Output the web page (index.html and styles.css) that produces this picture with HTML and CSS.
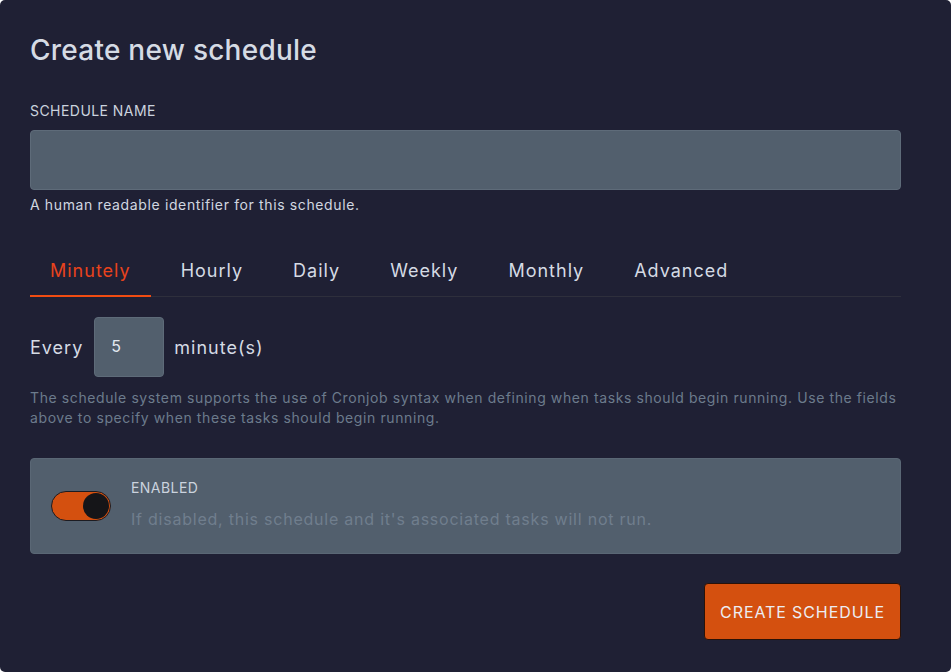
FILE: index.html
```html
<!DOCTYPE html>
<html lang="en">
<head>
<meta charset="utf-8">
<title>Create new schedule</title>
<link rel="stylesheet" href="styles.css">
</head>
<body>
<div class="panel">
  <h1 class="title">Create new schedule</h1>
  <div class="field">
    <label class="label" for="name">Schedule Name</label>
    <input class="input" id="name" type="text">
    <p class="help">A human readable identifier for this schedule.</p>
  </div>
  <div class="tabs">
    <div class="tab active">Minutely</div>
    <div class="tab">Hourly</div>
    <div class="tab">Daily</div>
    <div class="tab">Weekly</div>
    <div class="tab">Monthly</div>
    <div class="tab">Advanced</div>
  </div>
  <div class="every">
    <span>Every</span>
    <input class="num" type="text" value="5">
    <span>minute(s)</span>
  </div>
  <p class="desc">The schedule system supports the use of Cronjob syntax when defining when tasks should begin running. Use the fields above to specify when these tasks should begin running.</p>
  <div class="enabled">
    <div class="toggle"><span class="knob"></span></div>
    <div class="enabled-text">
      <div class="label">Enabled</div>
      <div class="enabled-desc">If disabled, this schedule and it's associated tasks will not run.</div>
    </div>
  </div>
  <div class="actions">
    <button class="btn">Create Schedule</button>
  </div>
</div>
</body>
</html>
```
FILE: styles.css
```css
* { box-sizing: border-box; }
html, body { margin: 0; padding: 0; background: #ffffff; }
body { font-family: "Inter", "Noto Sans", sans-serif; }
.panel {
  width: 951px;
  height: 672px;
  background: #1f2034;
  border-radius: 5px;
  padding: 28px 50px 0 30px;
  color: #e2e8f0;
}
.title {
  margin: 0;
  font-size: 28px;
  font-weight: 500;
  line-height: 44px;
  letter-spacing: 0.25px;
  color: #d5dbe4;
}
.field { margin-top: 29px; }
.label {
  display: block;
  font-size: 14px;
  line-height: 20px;
  letter-spacing: 0.45px;
  text-transform: uppercase;
  color: #cbd3de;
}
.field .label { margin-bottom: 9px; }
.input {
  display: block;
  width: 871px;
  height: 60px;
  background: #525f6d;
  border: 1px solid #5e6b79;
  border-radius: 4px;
  outline: none;
}
.help {
  margin: 5px 0 0;
  font-size: 14px;
  line-height: 20px;
  letter-spacing: 0.63px;
  color: #d1d7e0;
}
.tabs {
  display: flex;
  gap: 10px;
  margin-top: 34px;
  width: 871px;
  border-bottom: 1px solid #2e2f3c;
}
.tab {
  padding: 9px 20px 11px;
  font-size: 18px;
  line-height: 26px;
  letter-spacing: 1px;
  color: #d5dbe4;
  border-bottom: 2px solid transparent;
  margin-bottom: -1px;
}
.tab.active {
  color: #e8431c;
  border-bottom-color: #f04c12;
}
.every {
  display: flex;
  align-items: center;
  gap: 10px;
  margin-top: 20px;
  font-size: 18px;
  letter-spacing: 1px;
  color: #d5dbe4;
}
.every .num {
  width: 70px;
  height: 60px;
  margin-left: 1px;
  padding: 0 0 3px 16px;
  background: #525f6d;
  border: 1px solid #5e6b79;
  border-radius: 4px;
  color: #e2e8f0;
  font-family: inherit;
  font-size: 16px;
  outline: none;
}
.desc {
  margin: 11px 0 0;
  font-size: 14px;
  line-height: 20px;
  letter-spacing: 0.6px;
  color: #6c7b8c;
  width: 871px;
}
.enabled {
  display: flex;
  align-items: flex-start;
  gap: 20px;
  margin-top: 30px;
  width: 871px;
  height: 96px;
  padding: 19px 20px;
  background: #525f6d;
  border: 1px solid #5a6775;
  border-radius: 4px;
}
.toggle {
  flex: none;
  width: 60px;
  height: 30px;
  margin-top: 13px;
  border-radius: 15px;
  background: #d4500f;
  border: 1px solid #1c1c22;
  position: relative;
}
.knob {
  position: absolute;
  right: 1px;
  top: 1px;
  width: 26px;
  height: 26px;
  border-radius: 50%;
  background: #151518;
}
.enabled-desc {
  margin-top: 10px;
  font-size: 16px;
  line-height: 22px;
  letter-spacing: 0.77px;
  color: #707e8d;
}
.actions {
  display: flex;
  justify-content: flex-end;
  margin-top: 29px;
  width: 871px;
}
.btn {
  width: 197px;
  height: 57px;
  background: #d4500f;
  border: 1px solid #2a1208;
  border-radius: 4px;
  color: #ecedf2;
  font-family: inherit;
  font-size: 16px;
  letter-spacing: 0.9px;
  text-transform: uppercase;
}
```
